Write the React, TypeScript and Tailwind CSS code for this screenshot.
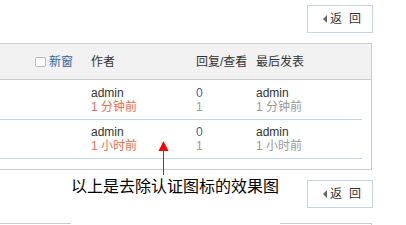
import React from "react";

const font = { fontFamily: '"Liberation Sans", "Noto Sans CJK SC", sans-serif' };

function BackButton() {
  return (
    <div className="flex justify-end">
      <div className="flex h-[28px] w-[66px] items-center border border-[#c2d5e3] bg-white pl-[15px] text-[12px] text-[#333]">
        <span className="mr-[3px] inline-block h-0 w-0 border-y-[4px] border-r-[4px] border-y-transparent border-r-[#666]" />
        <span className="tracking-[7px]">返回</span>
      </div>
    </div>
  );
}

function Row({ time, first }: { time: string; first?: boolean }) {
  return (
    <div className={`flex ${first ? "h-[40px]" : "h-[39px]"} items-center border-b border-[#c2d5e3] text-[12px] leading-[14px]`}>
      <div className="w-[91px]" />
      <div className="w-[105px]">
        <div className="text-[#333]">admin</div>
        <div className="text-[#f26c4f]">{time}</div>
      </div>
      <div className="w-[60px]">
        <div className="text-[#369]">0</div>
        <div className="text-[#999]">1</div>
      </div>
      <div>
        <div className="text-[#333]">admin</div>
        <div className="text-[#999]">{time}</div>
      </div>
    </div>
  );
}

export default function App() {
  return (
    <div className="relative h-[225px] w-[406px] overflow-hidden bg-white" style={font}>
      <div className="w-[373px] pt-[5px]">
        <BackButton />
        <div className="mt-[10px] w-[372px] border-y border-r border-[#ccc] pb-[10px]">
          <div className="flex h-[36px] items-center border-b border-[#ccc] bg-[#f2f2f2] text-[12px] text-[#333]">
            <div className="flex w-[91px] items-center justify-end pr-[18px]">
              <span className="mr-[3px] inline-block h-[10px] w-[11px] rounded-[2px] border border-[#bbb] bg-white" />
              <span className="text-[#336699]">新窗</span>
            </div>
            <div className="w-[105px]">作者</div>
            <div className="w-[60px]">回复/查看</div>
            <div>最后发表</div>
          </div>
          <div className="mr-[9px]">
            <Row time="1 分钟前" first />
            <Row time="1 小时前" />
          </div>
        </div>
        <div className="mt-[10px]">
          <BackButton />
        </div>
        <div className="mt-[15px] h-[20px] w-[372px] border-t border-r border-[#ccc]" />
      </div>

      <div className="absolute left-[71px] top-[171px] h-[54px] w-[209px] bg-white">
        <div className="pt-[4px] text-[16px] leading-[20px] text-black" style={{ fontFamily: '"Noto Sans CJK SC", sans-serif' }}>
          以上是去除认证图标的效果图
        </div>
      </div>
      <svg className="absolute left-[158px] top-[140px]" width="12" height="36" viewBox="0 0 12 36">
        <polygon points="5.5,1 10.5,11 0.5,11" fill="#ff0000" />
        <rect x="5" y="10" width="1" height="25" fill="#ff0000" />
      </svg>
    </div>
  );
}
